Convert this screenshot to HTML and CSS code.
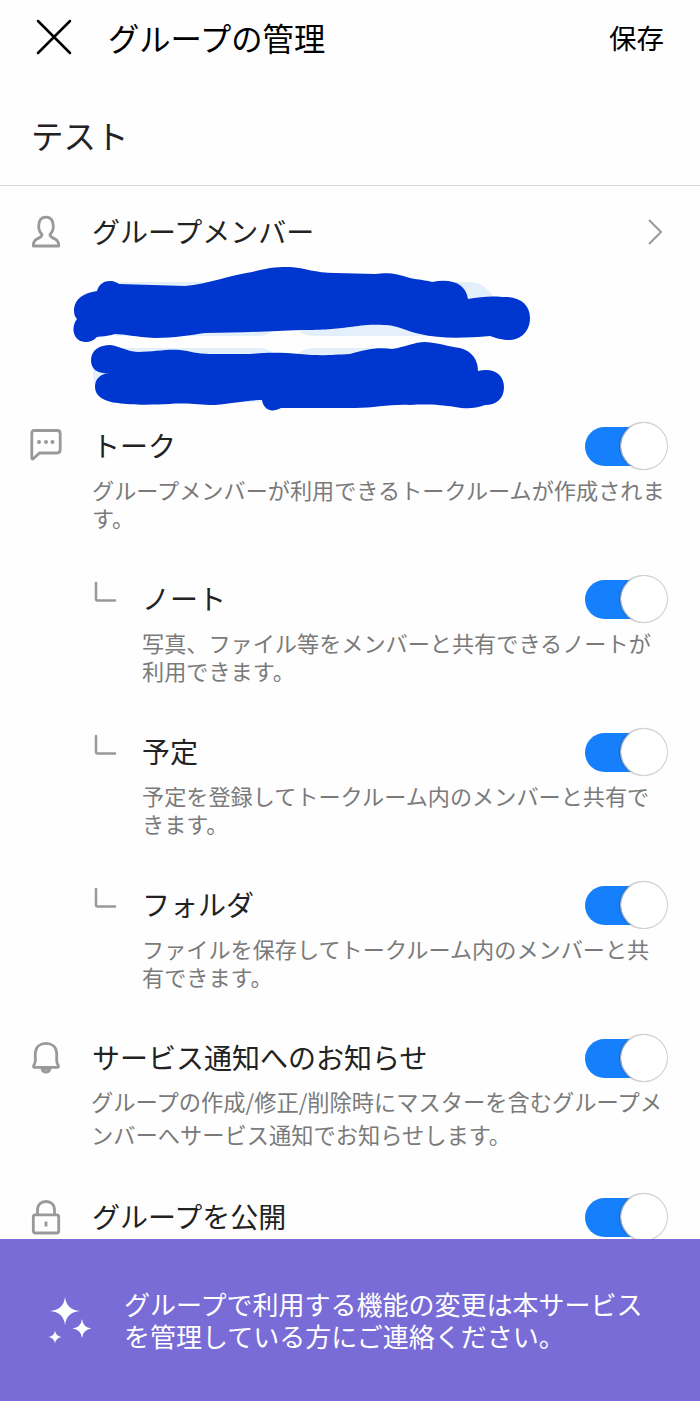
FILE: index.html
```html
<!DOCTYPE html>
<html lang="ja">
<head>
    <meta charset="UTF-8">
    <meta name="viewport" content="width=device-width, initial-scale=1.0">
    <title>グループの管理</title>
    <link rel="stylesheet" href="styles.css">
</head>
<body>

    <!-- Header -->
    <header class="header">
        <svg class="close" width="38" height="38" viewBox="0 0 38 38">
            <path d="M3 3 L35 35 M35 3 L3 35"/>
        </svg>
        <h1>グループの管理</h1>
        <div class="save">保存</div>
    </header>

    <div class="group-name">テスト</div>

    <main class="settings">
        <!-- Members -->
        <div class="members-row">
            <svg class="icon" width="32" height="34" viewBox="0 0 32 34">
                <path d="M12 19.5 C9.5 17 8.5 13.5 8.7 10.5 C9 5 12 2.2 16 2.2 C20 2.2 23 5 23.3 10.5 C23.5 13.5 22.5 17 20 19.5 C20 22 22 22.5 25 24 C28 25.5 28.8 27 28.8 31 L3.2 31 C3.2 27 4 25.5 7 24 C10 22.5 12 22 12 19.5 Z"/>
            </svg>
            <h2>グループメンバー</h2>
            <svg class="arrow" width="18" height="30" viewBox="0 0 18 30">
                <path d="M3 3 L15 15 L3 27"/>
            </svg>
        </div>

        <!-- Member chips, painted over -->
        <svg class="members" width="700" height="154" viewBox="0 262 700 154">
            <g fill="#e3effb">
                <rect x="93" y="282" width="192" height="54" rx="27"/>
                <rect x="287" y="282" width="209" height="54" rx="27"/>
                <rect x="93" y="348" width="192" height="54" rx="27"/>
                <rect x="287" y="348" width="176" height="54" rx="27"/>
            </g>
            <g fill="#0036d0">
                <path d="M74 309 C75 299 83 293 97 291 C99 284 104 281 110 281 C115 281 117 283 119 284 L185 286 C208 284 230 275 252 272 C270 267 280 267 290 267 C305 268 315 273 335 273 L375 274 C390 272 397 274 410 278 C420 280 425 280 432 282 C452 278 466 284 468 299 C480 297 490 296 502 297 C520 296 530 305 530 318 C530 332 520 341 506 340 C500 339 495 338 490 336 C465 338 440 339 420 334 C405 331 400 326 386 325 C365 324 360 326 350 327 C335 329 325 330 300 330 C270 331 240 333 205 333 C190 335 175 338 155 338 C135 337 125 334 115 334 C105 337 102 336 97 337 C93 341 90 342 85 342 C72 341 71 326 77 319 C74 316 74 312 74 309 Z"/>
                <path d="M91 360 C91 350 100 345 110 345 C120 346 125 351 138 352 C155 352 165 349 180 350 C190 351 197 354 210 354 L250 354 C270 352 285 353 300 354 C320 356 330 355 350 354 C365 350 375 347 392 349 C405 347 415 342 425 342 C440 343 450 347 460 348 C472 351 478 360 478 371 C494 367 504 375 504 387 C504 399 496 405 485 405 C474 409 466 409 455 407 C440 405 430 404 410 405 C390 404 375 408 355 408 L281 408 C270 414 263 408 262 400 C245 400 225 405 210 405 C195 404 180 403 170 404 C150 405 130 405 118 403 C104 402 95 396 95 387 C95 379 100 374 109 373 C98 374 91 370 91 360 Z"/>
            </g>
        </svg>

        <!-- Talk -->
        <section class="row">
            <svg class="icon" width="32" height="34" viewBox="0 0 32 34">
                <path d="M4 2.5 H27 Q30.2 2.500 30.2 5.500 V21.5 Q30.2 25 27 25 H9.5 L3 31 Q1.8 31.5 1.8 29.5 V5.5 Q1.8 2.5 4 2.5 Z"/>
                <g class="dots">
                    <circle cx="9" cy="14" r="2"/>
                    <circle cx="16" cy="14" r="2"/>
                    <circle cx="22.5" cy="14" r="2"/>
                </g>
            </svg>
            <div class="text">
                <div class="title">
                    <h2>トーク</h2>
                    <div class="toggle"><span class="knob"></span></div>
                </div>
                <p>グループメンバーが利用できるトークルームが作成されま<br>す。</p>
            </div>
        </section>

        <!-- Talk features -->
        <section class="row sub">
            <svg class="branch" width="24" height="22" viewBox="0 0 24 22">
                <path d="M3 2 V18 Q3 19.5 4.5 19.5 H22"/>
            </svg>
            <div class="text">
                <div class="title">
                    <h2>ノート</h2>
                    <div class="toggle"><span class="knob"></span></div>
                </div>
                <p>写真、ファイル等をメンバーと共有できるノートが<br>利用できます。</p>
            </div>
        </section>

        <section class="row sub">
            <svg class="branch" width="24" height="22" viewBox="0 0 24 22">
                <path d="M3 2 V18 Q3 19.5 4.5 19.5 H22"/>
            </svg>
            <div class="text">
                <div class="title">
                    <h2>予定</h2>
                    <div class="toggle"><span class="knob"></span></div>
                </div>
                <p>予定を登録してトークルーム内のメンバーと共有で<br>きます。</p>
            </div>
        </section>

        <section class="row sub">
            <svg class="branch" width="24" height="22" viewBox="0 0 24 22">
                <path d="M3 2 V18 Q3 19.5 4.5 19.5 H22"/>
            </svg>
            <div class="text">
                <div class="title">
                    <h2>フォルダ</h2>
                    <div class="toggle"><span class="knob"></span></div>
                </div>
                <p>ファイルを保存してトークルーム内のメンバーと共<br>有できます。</p>
            </div>
        </section>

        <!-- Notification -->
        <section class="row notice">
            <svg class="icon" width="32" height="34" viewBox="0 0 32 34">
                <path d="M5.300 21 V13 C5.8 6.5 10.5 3.4 16 3.4 C21.5 3.4 26.2 6.5 26.7 13 V21 Q26.9 23.500 28.300 25.500 Q28.900 27.400 27.5 27.4 H4.5 Q3.100 27.4 3.700 25.500 Q5.100 23.500 5.300 21 Z"/>
                <path d="M12 28.5 Q12.5 32 16 32 Q19.5 32 20 28.5 Z"/>
            </svg>
            <div class="text">
                <div class="title">
                    <h2>サービス通知へのお知らせ</h2>
                    <div class="toggle"><span class="knob"></span></div>
                </div>
                <p>グループの作成/修正/削除時にマスターを含むグループメ<br>ンバーへサービス通知でお知らせします。</p>
            </div>
        </section>

        <!-- Public -->
        <section class="row">
            <svg class="icon" width="32" height="36" viewBox="0 0 32 36">
                <path d="M7.500 15.5 V11 C7.5 5.5 11 2.5 16 2.5 C21 2.5 24.5 5.5 24.5 11 V15.5"/>
                <rect x="3.3" y="15.8" width="25.4" height="18.2" rx="2"/>
                <path d="M16 22.5 V27.5"/>
            </svg>
            <div class="text">
                <div class="title">
                    <h2>グループを公開</h2>
                    <div class="toggle"><span class="knob"></span></div>
                </div>
            </div>
        </section>
    </main>

    <!-- Banner -->
    <footer class="banner">
        <svg width="46" height="48" viewBox="0 0 46 48">
            <path d="M18 1 Q19.5 14 33 15 Q19.5 16 18 29 Q16.5 16 3 15 Q16.5 14 18 1 Z"/>
            <path d="M35 23 Q36 31.5 44.5 32.5 Q36 33.5 35 42 Q34 33.5 25.5 32.5 Q34 31.5 35 23 Z"/>
            <path d="M8 34.5 Q8.7 40 14.5 41 Q8.7 42 8 47.5 Q7.3 42 1.5 41 Q7.3 40 8 34.5 Z"/>
        </svg>
        <p>グループで利用する機能の変更は本サービス<br>を管理している方にご連絡ください。</p>
    </footer>

</body>
</html>
```
FILE: styles.css
```css
* {
    box-sizing: border-box;
}

body {
    margin: 0;
    height: 1402px;
    padding-bottom: 1px;
    display: flex;
    flex-direction: column;
    overflow: hidden;
    background-color: #fefefe;
    color: #222;
    font-family: "Noto Sans CJK JP", sans-serif;
}

h1, h2, p {
    margin: 0;
    font-weight: 400;
    white-space: nowrap;
}

svg {
    display: block;
    flex-shrink: 0;
    fill: none;
    stroke-linejoin: round;
}

/* Header */
.header {
    height: 74px;
    padding: 0 36px 0 35px;
    display: flex;
    align-items: center;
    color: #000;
}

.close {
    stroke: #000;
    stroke-width: 2.5;
    stroke-linecap: round;
}

.header h1 {
    flex: 1;
    margin-left: 35px;
    font-size: 31.3px;
}

.save {
    font-size: 27.5px;
}

.group-name {
    height: 112px;
    padding: 9px 31px 0;
    border-bottom: 1px solid #dadada;
    display: flex;
    align-items: center;
    font-size: 32.5px;
}

/* Settings list */
.settings {
    flex: 1;
    min-height: 0;
    overflow: hidden;
}

.settings h2 {
    padding-bottom: 2px;
    font-size: 28px;
    line-height: 46px;
}

.icon {
    stroke: #999;
    stroke-width: 2.8;
}

.members-row {
    height: 76px;
    padding: 16px 36px 0 30px;
    display: flex;
    align-items: center;
}

.members-row h2 {
    flex: 1;
    margin-left: 30px;
}

.arrow {
    stroke: #999;
    stroke-width: 2;
}

.members {
    margin-bottom: 6px;
}

.row {
    height: 153px;
    padding: 0 32px 0 30px;
    display: flex;
    gap: 30px;
}

.row .icon {
    margin-top: 6px;
}

.dots {
    fill: #999;
    stroke: none;
}

.text {
    flex: 1;
    min-width: 0;
}

.title {
    display: flex;
    justify-content: space-between;
    align-items: center;
}

.row p {
    margin-top: 6px;
    color: #7a7a7a;
    font-size: 22.15px;
    line-height: 27.5px;
}

.sub {
    padding-left: 93px;
    gap: 25px;
}

.branch {
    margin-top: 6px;
    stroke: #999;
    stroke-width: 2.5;
    stroke-linecap: round;
}

.notice {
    height: 159px;
}

.notice p {
    margin: 3px 0 0 -1px;
    font-size: 22.25px;
    line-height: 33px;
}

/* Toggle */
.toggle {
    width: 83px;
    height: 48px;
    display: flex;
    align-items: center;
    justify-content: flex-end;
}

.toggle::before {
    content: "";
    width: 60px;
    height: 39px;
    margin-right: -25px;
    border-radius: 20px 0 0 20px;
    background-color: #167ffb;
}

.knob {
    width: 48px;
    height: 48px;
    border: 1px solid #d0d0d0;
    border-left-color: #a9b4c4;
    border-radius: 50%;
    background-color: #fff;
    background-clip: padding-box;
    box-shadow: -1px 0 1px rgba(0, 0, 0, 0.2);
}

/* Banner */
.banner {
    height: 162px;
    padding-left: 47px;
    display: flex;
    align-items: center;
    gap: 31px;
    background-color: #796cd7;
    color: #fff;
}

.banner svg {
    fill: #fff;
}

.banner p {
    font-size: 26px;
    line-height: 32px;
}
```
